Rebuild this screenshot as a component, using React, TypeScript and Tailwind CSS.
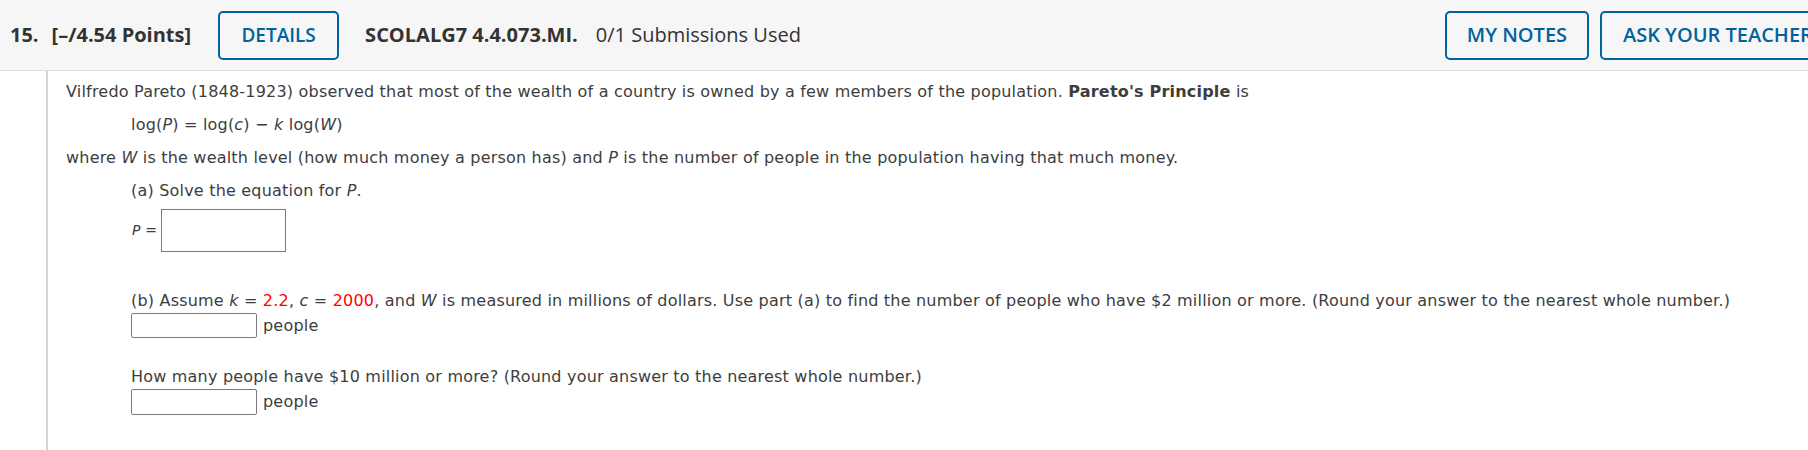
import React from "react";

export default function App() {
  const body = { fontFamily: '"DejaVu Sans", Verdana, sans-serif' };
  const head = { fontFamily: '"Open Sans", sans-serif' };
  return (
    <div className="w-[1808px] h-[450px] bg-white overflow-hidden">
      <div
        className="w-[1850px] h-[71px] bg-[#f6f6f6] border-b border-[#dddddd] flex items-center whitespace-nowrap text-[20px] text-[#333333]"
        style={head}
      >
        <span className="ml-[10px] font-bold">15.</span>
        <span className="ml-[13px] font-bold">[–/4.54 Points]</span>
        <button className="ml-[27px] h-[49px] w-[121px] border-2 border-[#00639d] rounded-[5px] text-[#00639d] text-[19px] font-semibold">
          DETAILS
        </button>
        <span className="ml-[26px] font-bold">SCOLALG7 4.4.073.MI.</span>
        <span className="ml-[18px]">0/1 Submissions Used</span>
        <button className="ml-[644px] h-[49px] w-[144px] border-2 border-[#00639d] rounded-[5px] text-[#00639d] text-[20px] font-semibold shrink-0">
          MY NOTES
        </button>
        <button className="ml-[11px] h-[49px] pl-[21px] pr-[21px] border-2 border-[#00639d] rounded-[5px] text-[#00639d] text-[20px] font-semibold shrink-0">
          ASK YOUR TEACHER
        </button>
      </div>
      <div className="flex h-[379px]">
        <div className="w-[46px] shrink-0" />
        <div
          className="flex-1 border-l-2 border-[#d6d6d6] pl-[18px] pt-[4px] text-[16px] tracking-[0.2px] text-[#3d3d3d]"
          style={body}
        >
          <div className="leading-[33px] whitespace-nowrap">
            Vilfredo Pareto (1848-1923) observed that most of the wealth of a country is owned by a few members of the population.{" "}
            <b>Pareto's Principle</b> is
          </div>
          <div className="leading-[33px] pl-[65px]">
            log(<i>P</i>) = log(<i>c</i>) − <i>k</i> log(<i>W</i>)
          </div>
          <div className="leading-[33px] whitespace-nowrap">
            where <i>W</i> is the wealth level (how much money a person has) and <i>P</i> is the number of people in the population having that much money.
          </div>
          <div className="pl-[65px]">
            <div className="leading-[33px]">(a) Solve the equation for <i>P</i>.</div>
            <div className="flex items-center mt-[2px]">
              <span className="text-[14px] mr-[4px] ml-[1px]">
                <i>P</i> =
              </span>
              <div className="w-[125px] h-[43px] border border-[#7a7a7a]" />
            </div>
            <div className="leading-[24px] mt-[37px] whitespace-nowrap">
              (b) Assume <i>k</i> = <span className="text-[#ff0000]">2.2</span>, <i>c</i> ={" "}
              <span className="text-[#ff0000]">2000</span>, and <i>W</i> is measured in millions of dollars. Use part (a) to find the number of people who have $2 million or more. (Round your answer to the nearest whole number.)
            </div>
            <div className="flex items-center">
              <div className="w-[126px] h-[25px] border border-[#7a7a7a] rounded-[2px]" />
              <span className="ml-[6px]">people</span>
            </div>
            <div className="leading-[24px] mt-[27px]">
              How many people have $10 million or more? (Round your answer to the nearest whole number.)
            </div>
            <div className="flex items-center">
              <div className="w-[126px] h-[26px] border border-[#7a7a7a] rounded-[2px]" />
              <span className="ml-[6px]">people</span>
            </div>
          </div>
        </div>
      </div>
    </div>
  );
}
